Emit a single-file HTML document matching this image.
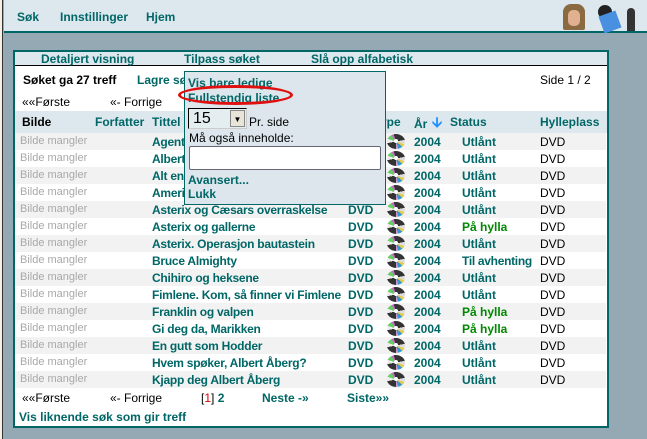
<!DOCTYPE html>
<html><head><meta charset="utf-8"><style>
*{margin:0;padding:0;box-sizing:border-box}
body{width:647px;height:439px;overflow:hidden;background:#95a9b5;font-family:"Liberation Sans",sans-serif;font-size:12px;position:relative}
.a{position:absolute;white-space:nowrap}
.t{color:#006666;font-weight:bold}
.g{color:#a8a8a8;font-weight:normal;font-size:11px}
.k{color:#000}
.grn{color:#008800;font-weight:bold}
.row{position:absolute;left:15px;width:591px;height:17px}
.row span{position:absolute;top:2px;white-space:nowrap}
.row .ti{letter-spacing:-0.25px}
.cd{width:18px;height:15px;top:1px!important;border-radius:50%;background:conic-gradient(#333 0 22%,#ddd 22% 30%,#e6c84a 30% 36%,#39c 36% 45%,#c9c 45% 50%,#333 50% 72%,#eee 72% 80%,#6c6 80% 90%,#c6c 90% 95%,#333 95%)}
.cd::after{content:"";position:absolute;left:7px;top:5px;width:4px;height:4px;border-radius:50%;background:#fff}
</style></head><body>
<div class="a" style="left:0;top:0;width:3px;height:439px;background:#f4f0e6;border-right:1px solid #333"></div>
<div class="a" style="left:4px;top:0;width:643px;height:33px;background:#dde8ee;border-bottom:2px solid #006666"></div>
<div class="a t" style="left:17px;top:10px;font-size:12px">Søk</div>
<div class="a t" style="left:60px;top:10px">Innstillinger</div>
<div class="a t" style="left:146px;top:10px">Hjem</div>
<div class="a" style="left:563px;top:4px;width:22px;height:26px;background:#8a6a40;border-radius:8px 8px 2px 2px"></div>
<div class="a" style="left:568px;top:10px;width:12px;height:16px;background:#e0b090;border-radius:5px"></div>
<div class="a" style="left:598px;top:5px;width:14px;height:14px;background:#222;border-radius:50%"></div>
<div class="a" style="left:601px;top:13px;width:18px;height:18px;background:#4a90e0;transform:rotate(-20deg)"></div>
<div class="a" style="left:627px;top:8px;width:8px;height:23px;background:#333;border-radius:4px 4px 0 0"></div>

<div class="a" style="left:13px;top:50px;width:596px;height:378px;background:#fff;border:2px solid #006666"></div>
<div class="a" style="left:15px;top:52px;width:592px;height:14px;background:#dde8ee;border-bottom:1px solid #000"></div>
<div class="a t" style="left:41px;top:52px">Detaljert visning</div>
<div class="a t" style="left:184px;top:52px">Tilpass søket</div>
<div class="a t" style="left:311px;top:52px">Slå opp alfabetisk</div>

<div class="a k" style="left:23px;top:73px;font-weight:bold">Søket ga 27 treff</div>
<div class="a t" style="left:137px;top:73px">Lagre søk</div>
<div class="a k" style="left:540px;top:73px">Side 1 / 2</div>
<div class="a k" style="left:22px;top:95px">««Første</div>
<div class="a k" style="left:110px;top:95px">«- Forrige</div>
<div class="a t" style="left:380px;top:95px">»</div>

<div class="a" style="left:15px;top:111px;width:592px;height:22px;background:#dde8ee"></div>
<div class="a k" style="left:22px;top:115px;font-weight:bold">Bilde</div>
<div class="a t" style="left:95px;top:115px">Forfatter</div>
<div class="a t" style="left:152px;top:115px">Tittel</div>
<div class="a t" style="left:380px;top:115px">ype</div>
<div class="a t" style="left:414px;top:117px">År</div>
<div class="a" style="left:432px;top:112px;color:#1e90ff;font-size:14px;font-weight:bold">🡫</div>
<div class="a t" style="left:450px;top:115px">Status</div>
<div class="a t" style="left:540px;top:115px">Hylleplass</div>

<div id="rows"></div>
<script>
var d=[["Agent",0],["Albert",0],["Alt en",0],["Ameri",0],["Asterix og Cæsars overraskelse",0],["Asterix og gallerne",1],["Asterix. Operasjon bautastein",0],["Bruce Almighty",2],["Chihiro og heksene",0],["Fimlene. Kom, så finner vi Fimlene",0],["Franklin og valpen",1],["Gi deg da, Marikken",1],["En gutt som Hodder",0],["Hvem spøker, Albert Åberg?",0],["Kjapp deg Albert Åberg",0]];
var h="";
d.forEach(function(r,i){var y=133+i*17;var st=r[1]==1?'<span class="grn" style="left:447px">På hylla</span>':r[1]==2?'<span class="t" style="left:447px;letter-spacing:-0.3px">Til avhenting</span>':'<span class="t" style="left:447px">Utlånt</span>';
h+='<div class="row" style="top:'+y+'px;background:'+(i%2?'#fff':'#f2f2f2')+'"><span class="g" style="left:5px">Bilde mangler</span><span class="t ti" style="left:137px">'+r[0]+'</span><span class="t" style="left:333px">DVD</span><span class="cd" style="left:372px"></span><span class="t" style="left:399px">2004</span>'+st+'<span class="k" style="left:525px">DVD</span></div>';});
document.getElementById("rows").innerHTML=h;
</script>

<div class="a k" style="left:22px;top:391px">««Første</div>
<div class="a k" style="left:110px;top:391px">«- Forrige</div>
<div class="a k" style="left:201px;top:391px">[<span style="color:#d00">1</span>] <span class="t">2</span></div>
<div class="a t" style="left:262px;top:391px">Neste -»</div>
<div class="a t" style="left:347px;top:391px">Siste»»</div>
<div class="a t" style="left:19px;top:410px">Vis liknende søk som gir treff</div>

<div class="a" style="left:184px;top:71px;width:202px;height:134px;background:#dde6ec;border:1px solid #006666"></div>
<div class="a t" style="left:188px;top:76px">Vis bare ledige</div>
<div class="a t" style="left:188px;top:91px">Fullstendig liste</div>
<div class="a" style="left:178px;top:85px;width:115px;height:20px;border:3px solid #e01010;border-radius:50%"></div>
<div class="a" style="left:188px;top:108px;width:59px;height:21px;background:#e4eef0;border:1px solid #000;border-right-color:#ccc;border-bottom-color:#ccc;font-size:16px;padding:1px 0 0 4px">15</div>
<div class="a" style="left:230px;top:110px;width:15px;height:17px;background:#e8e4d8;border:1px solid #888;font-size:8px;text-align:center;line-height:17px">▼</div>
<div class="a k" style="left:249px;top:115px">Pr. side</div>
<div class="a k" style="left:189px;top:131px">Må også inneholde:</div>
<div class="a" style="left:189px;top:146px;width:192px;height:24px;background:#fff;border:1px solid #667;border-radius:2px"></div>
<div class="a t" style="left:188px;top:173px">Avansert...</div>
<div class="a t" style="left:188px;top:187px">Lukk</div>
</body></html>
